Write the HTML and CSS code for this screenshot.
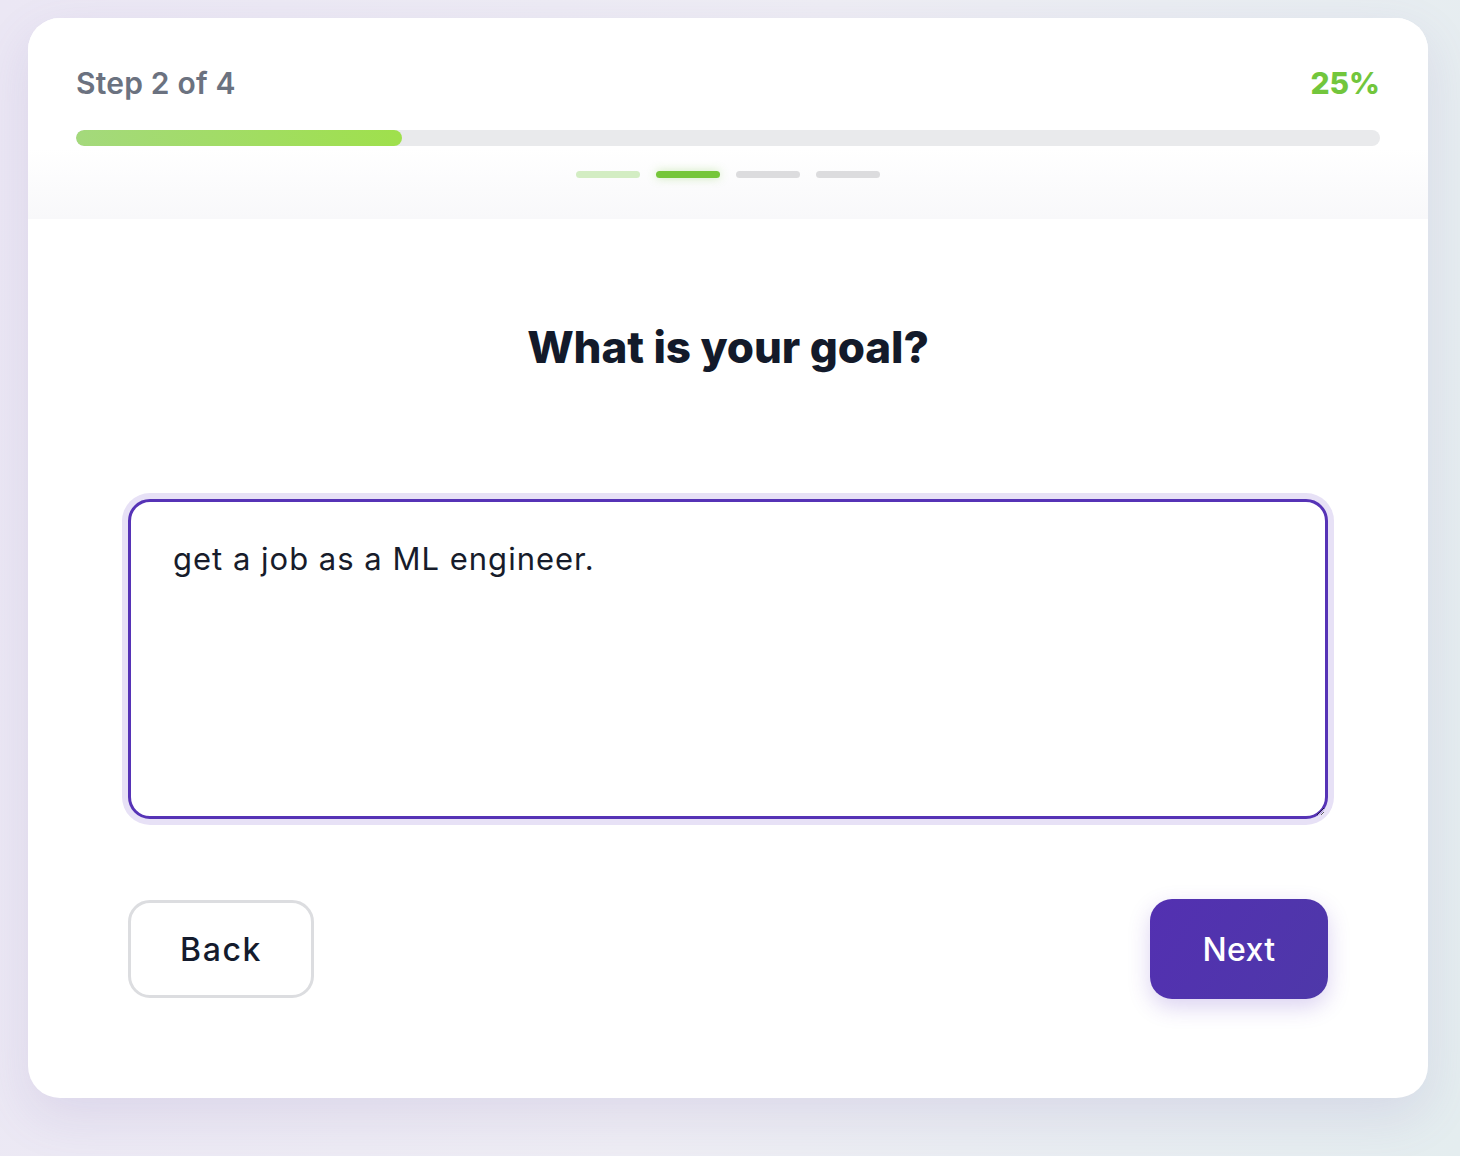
FILE: index.html
```html
<!DOCTYPE html>
<html lang="en">
<head>
<meta charset="utf-8">
<title>Step 2 of 4</title>
<link rel="stylesheet" href="styles.css">
</head>
<body>
<div class="card">
  <div class="header">
    <div class="header-row">
      <span class="step">Step 2 of 4</span>
      <span class="percent">25%</span>
    </div>
    <div class="bar"><div class="bar-fill" style="width:25%"></div></div>
    <div class="dots">
      <span class="dot done"></span>
      <span class="dot active"></span>
      <span class="dot"></span>
      <span class="dot"></span>
    </div>
  </div>
  <div class="body">
    <h1 class="title">What is your goal?</h1>
    <textarea class="answer">get a job as a ML engineer.</textarea>
    <div class="actions">
      <button class="btn btn-back">Back</button>
      <button class="btn btn-next">Next</button>
    </div>
  </div>
</div>
</body>
</html>
```

FILE: styles.css
```css
html, body {
  margin: 0;
  padding: 0;
}
body {
  width: 1460px;
  min-height: 1156px;
  background: linear-gradient(100deg, #ebe7f4 0%, #eeedf4 50%, #e4edef 100%);
  font-family: "Inter", "Noto Sans", sans-serif;
  padding: 18px 32px 0 28px;
  box-sizing: border-box;
}
.card {
  width: 1400px;
  background: #ffffff;
  border-radius: 32px;
  box-shadow: 0 18px 50px rgba(120, 100, 180, 0.14);
  overflow: hidden;
}
.header {
  padding: 47px 48px 41px;
  background: linear-gradient(180deg, #ffffff 0%, #ffffff 65%, #f8f8fa 100%);
}
.header-row {
  display: flex;
  justify-content: space-between;
  align-items: center;
  height: 36px;
}
.step {
  font-size: 30px;
  font-weight: 600;
  letter-spacing: 0.2px;
  color: #6b7280;
}
.percent {
  font-size: 30px;
  font-weight: 800;
  color: #72c63c;
}
.bar {
  margin-top: 29px;
  height: 16px;
  border-radius: 8px;
  background: #e9eaec;
  overflow: hidden;
}
.bar-fill {
  height: 100%;
  border-radius: 8px;
  background: linear-gradient(90deg, #a4d97c 0%, #9fe04c 100%);
}
.dots {
  margin-top: 25px;
  display: flex;
  justify-content: center;
  gap: 16px;
}
.dot {
  width: 64px;
  height: 7px;
  border-radius: 4px;
  background: #dcdcde;
}
.dot.done {
  background: #d3edc3;
}
.dot.active {
  background: #76c63a;
  box-shadow: 0 0 10px rgba(118, 198, 58, 0.35);
}
.body {
  padding: 100px 100px 99px;
  display: flex;
  flex-direction: column;
}
.title {
  margin: 0;
  text-align: center;
  font-size: 44px;
  line-height: 56px;
  font-weight: 800;
  letter-spacing: -0.1px;
  color: #131a2a;
}
.answer {
  margin-top: 124px;
  height: 320px;
  box-sizing: border-box;
  border: 3px solid #5633b6;
  border-radius: 22px;
  box-shadow: 0 0 0 6px #e7e1f6;
  padding: 37px 42px;
  font-family: "Inter", "Noto Sans", sans-serif;
  font-size: 31px;
  line-height: 40px;
  letter-spacing: 1px;
  color: #171c2b;
  outline: none;
  background: #ffffff;
}
.actions {
  margin-top: 80px;
  display: flex;
  justify-content: space-between;
  align-items: center;
}
.btn {
  font-family: "Inter", "Noto Sans", sans-serif;
  font-size: 32px;
  font-weight: 500;
  border-radius: 22px;
  box-sizing: border-box;
  cursor: pointer;
  letter-spacing: 0.3px;
}
.btn-back {
  width: 186px;
  height: 98px;
  background: #ffffff;
  border: 3px solid #dcdde0;
  color: #141b2d;
  letter-spacing: 1.6px;
}
.btn-next {
  width: 178px;
  height: 100px;
  background: linear-gradient(120deg, #5330b1 0%, #4e38a9 100%);
  border: none;
  color: #ffffff;
  box-shadow: 0 8px 22px rgba(90, 50, 190, 0.22);
}
```
